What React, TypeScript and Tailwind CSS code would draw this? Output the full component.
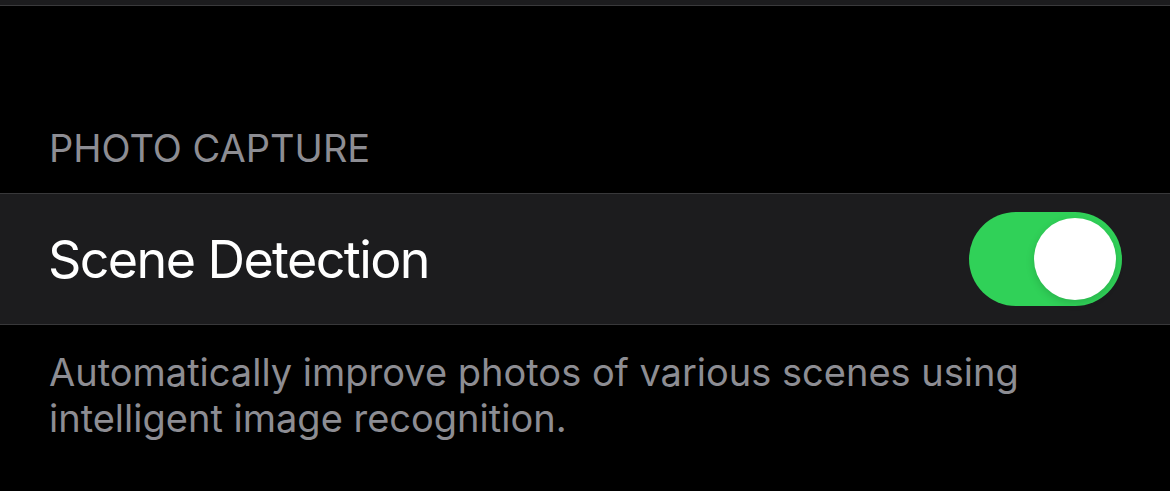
export default function App() {
  return (
    <div className="w-[1170px] h-[491px] overflow-hidden bg-black font-['Inter',sans-serif]">
      <div className="h-[6px] bg-[#1c1c1e] border-b border-[#3a3a3c]" />
      <div className="h-[187px] flex items-end pl-[49px] pb-[26px]">
        <span className="text-[38px] leading-[38px] text-[#8d8d93] tracking-normal">PHOTO CAPTURE</span>
      </div>
      <div className="h-[132px] flex items-center justify-between pl-[48px] pr-[48px] bg-[#1c1c1e] border-y border-[#38383a]">
        <span className="text-[52px] text-white tracking-[-1.6px] pt-[2px]">Scene Detection</span>
        <Toggle />
      </div>
      <p className="pl-[49px] pr-[40px] pt-[24px] text-[38px] leading-[46px] text-[#8d8d93]">
        Automatically improve photos of various scenes using intelligent image recognition.
      </p>
    </div>
  );
}

function Toggle() {
  return (
    <div className="relative w-[153px] h-[94px] rounded-full bg-[#30d158]">
      <div className="absolute right-[6px] top-[6px] w-[82px] h-[82px] rounded-full bg-white shadow-[0_3px_8px_rgba(0,0,0,0.15)]" />
    </div>
  );
}
